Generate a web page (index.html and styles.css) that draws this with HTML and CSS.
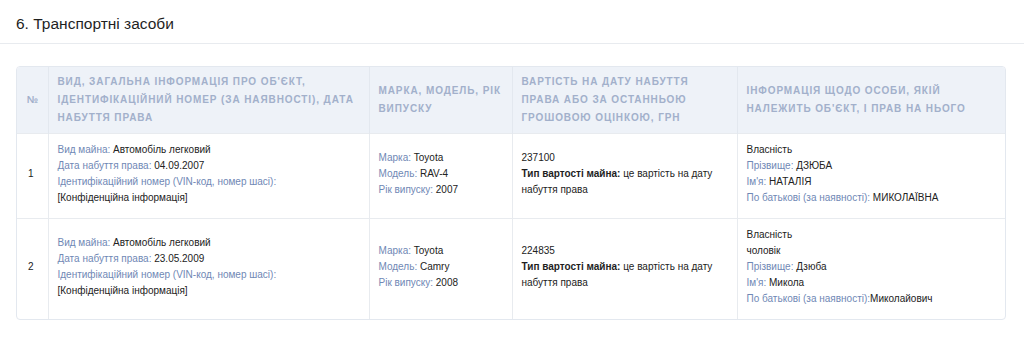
FILE: index.html
```html
<!DOCTYPE html>
<html lang="uk">
<head>
<meta charset="utf-8">
<link rel="stylesheet" href="styles.css">
</head>
<body>
<div class="section-title">6. Транспортні засоби</div>
<div class="content">
  <div class="table-wrap">
    <table class="data">
      <colgroup>
        <col class="c1"><col class="c2"><col class="c3"><col class="c4"><col class="c5">
      </colgroup>
      <thead>
        <tr>
          <th class="num">№</th>
          <th>Вид, загальна інформація про об'єкт, ідентифікаційний номер (за наявності), дата набуття права</th>
          <th>Марка, модель, рік випуску</th>
          <th>Вартість на дату набуття права або за останньою грошовою оцінкою, грн</th>
          <th>Інформація щодо особи, якій належить об'єкт, і прав на нього</th>
        </tr>
      </thead>
      <tbody>
        <tr>
          <td class="num">1</td>
          <td>
            <div><span class="lbl">Вид майна:</span> Автомобіль легковий</div>
            <div><span class="lbl">Дата набуття права:</span> 04.09.2007</div>
            <div><span class="lbl">Ідентифікаційний номер (VIN-код, номер шасі):</span></div>
            <div>[Конфіденційна інформація]</div>
          </td>
          <td>
            <div><span class="lbl">Марка:</span> Toyota</div>
            <div><span class="lbl">Модель:</span> RAV-4</div>
            <div><span class="lbl">Рік випуску:</span> 2007</div>
          </td>
          <td>
            <div>237100</div>
            <div><b>Тип вартості майна:</b> це вартість на дату набуття права</div>
          </td>
          <td>
            <div>Власність</div>
            <div><span class="lbl">Прізвище:</span> ДЗЮБА</div>
            <div><span class="lbl">Ім'я:</span> НАТАЛІЯ</div>
            <div><span class="lbl">По батькові (за наявності):</span> МИКОЛАЇВНА</div>
          </td>
        </tr>
        <tr>
          <td class="num">2</td>
          <td>
            <div><span class="lbl">Вид майна:</span> Автомобіль легковий</div>
            <div><span class="lbl">Дата набуття права:</span> 23.05.2009</div>
            <div><span class="lbl">Ідентифікаційний номер (VIN-код, номер шасі):</span></div>
            <div>[Конфіденційна інформація]</div>
          </td>
          <td>
            <div><span class="lbl">Марка:</span> Toyota</div>
            <div><span class="lbl">Модель:</span> Camry</div>
            <div><span class="lbl">Рік випуску:</span> 2008</div>
          </td>
          <td>
            <div>224835</div>
            <div><b>Тип вартості майна:</b> це вартість на дату набуття права</div>
          </td>
          <td>
            <div>Власність</div>
            <div>чоловік</div>
            <div><span class="lbl">Прізвище:</span> Дзюба</div>
            <div><span class="lbl">Ім'я:</span> Микола</div>
            <div><span class="lbl">По батькові (за наявності):</span>Миколайович</div>
          </td>
        </tr>
      </tbody>
    </table>
  </div>
</div>
</body>
</html>
```

FILE: styles.css
```css
html, body {
  margin: 0;
  padding: 0;
  background: #ffffff;
  font-family: "Liberation Sans", Arial, Helvetica, sans-serif;
  color: #222222;
}

.section-title {
  font-size: 15.5px;
  line-height: 20px;
  padding: 14px 16px 9px;
  border-bottom: 1px solid #e8ebef;
  color: #1f1f1f;
}

.content {
  padding: 22px 18px 20px 16px;
}

.table-wrap {
  border: 1px solid #e3e8ef;
  border-radius: 4px;
  overflow: hidden;
}

.data {
  width: 100%;
  border-collapse: collapse;
  table-layout: fixed;
}

.c1 { width: 31px; }
.c2 { width: 321px; }
.c3 { width: 143px; }
.c4 { width: 225px; }
.c5 { width: auto; }

.data th {
  background: #eef2f8;
  color: #a2b0cb;
  font-size: 10px;
  font-weight: bold;
  text-transform: uppercase;
  letter-spacing: 0.9px;
  line-height: 18px;
  text-align: left;
  vertical-align: middle;
  padding: 6px 9px;
  border-left: 1px solid #e3e8ef;
}

.data th:first-child,
.data td:first-child {
  border-left: none;
}

.data th.num {
  text-align: center;
  padding: 6px 0;
  letter-spacing: 0;
}

.data td {
  font-size: 10px;
  line-height: 16px;
  vertical-align: middle;
  padding: 8px 9px 12px;
  border-left: 1px solid #e8ebef;
  border-top: 1px solid #e8ebef;
  color: #222222;
}

.data td.num {
  text-align: left;
  padding-left: 11px;
  padding-right: 0;
}

.data td b {
  font-weight: bold;
  color: #1e1e1e;
}

.lbl {
  color: #7088b5;
}
```
